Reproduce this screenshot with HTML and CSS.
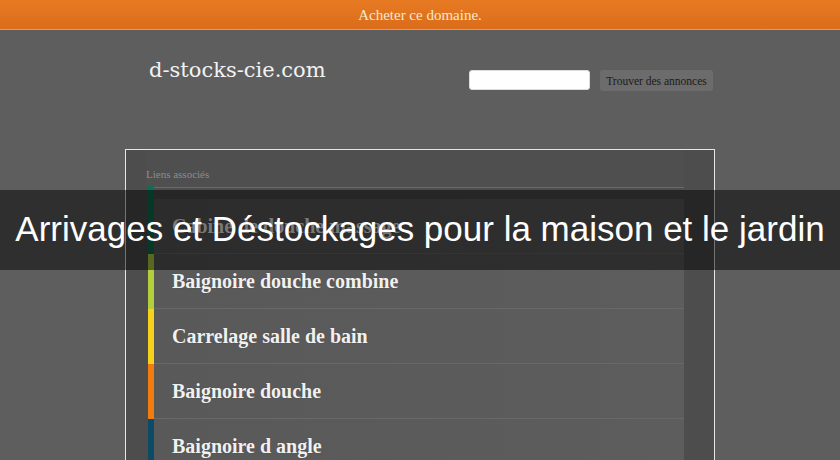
FILE: index.html
```html
<!DOCTYPE html>
<html lang="fr">
<head>
<meta charset="utf-8">
<title>d-stocks-cie.com</title>
<link rel="stylesheet" href="styles.css">
</head>
<body>
<div class="topbar">Acheter ce domaine.</div>
<div class="header">
  <div class="logo">d-stocks-cie.com</div>
  <form class="search">
    <input class="search-input" type="text">
    <button class="search-btn" type="button">Trouver des annonces</button>
  </form>
</div>
<div class="box">
  <div class="box-title">Liens associés</div>
  <ul class="links">
    <li class="link first"><span class="bar c1"></span><span class="label">Cabine de douche massage</span></li>
    <li class="link"><span class="bar c2"></span><span class="label">Baignoire douche combine</span></li>
    <li class="link"><span class="bar c3"></span><span class="label">Carrelage salle de bain</span></li>
    <li class="link"><span class="bar c4"></span><span class="label">Baignoire douche</span></li>
    <li class="link"><span class="bar c5"></span><span class="label">Baignoire d angle</span></li>
  </ul>
</div>
<div class="overlay">Arrivages et Déstockages pour la maison et le jardin</div>
</body>
</html>
```

FILE: styles.css
```css
html, body {
  margin: 0;
  padding: 0;
}
body {
  background: #5e5e5e;
  width: 840px;
  height: 460px;
  overflow: hidden;
  position: relative;
  font-family: "Liberation Serif", serif;
}
.topbar {
  height: 29px;
  line-height: 30px;
  background: linear-gradient(#e77b22, #da6c1b);
  border-bottom: 1px solid #c4a178;
  color: #f6e8cc;
  text-align: center;
  font-size: 15px;
}
.header {
  width: 590px;
  height: 119px;
  margin: 0 auto;
  box-sizing: border-box;
  padding: 0 2px 0 24px;
  display: flex;
  justify-content: space-between;
  align-items: flex-start;
}
.logo {
  margin-top: 28px;
  font-family: "DejaVu Serif", serif;
  font-size: 21px;
  line-height: 24px;
  color: #f2f2f2;
}
.search {
  margin: 40px 0 0 0;
  display: flex;
  gap: 10px;
}
.search-input {
  width: 121px;
  height: 20px;
  box-sizing: border-box;
  border: 1px solid #ddd;
  border-radius: 3px;
  background: #fff;
  margin: 0;
  padding: 0;
}
.search-btn {
  width: 113px;
  height: 21px;
  box-sizing: border-box;
  border: none;
  border-radius: 3px;
  background: #6c6c6c;
  color: #1a1a1a;
  font-family: "Liberation Serif", serif;
  font-size: 11.5px;
  padding: 0;
  margin: 0;
}
.box {
  width: 590px;
  height: 330px;
  margin: 0 auto;
  box-sizing: border-box;
  border: 1px solid #e6e6e6;
  border-bottom: none;
  background: #4d4d4d;
  padding: 0 30px 0 22px;
}
.box-title {
  height: 37px;
  line-height: 48px;
  margin-left: -2px;
  font-size: 11px;
  color: #8d8d8d;
  background: #4f4f4f;
}
.links {
  list-style: none;
  margin: 0;
  padding: 11px 0 0 0;
  border-top: 1px solid #6a6a6a;
}
.link {
  display: flex;
  height: 55px;
}
.bar {
  width: 6px;
  flex: none;
}
.first .bar {
  margin-top: -14px;
}
.label {
  flex: 1;
  background: linear-gradient(90deg, #595959, #5d5d5d);
  border-bottom: 1px solid #686868;
  padding-left: 18px;
  line-height: 55px;
  font-size: 20px;
  font-weight: bold;
  color: #f1f1f1;
  text-shadow: 0 0 1px rgba(0,0,0,0.3);
}
.c1 { background: #0e6e4f; }
.c2 { background: #b4cf3c; }
.c3 { background: #f7d21b; }
.c4 { background: #f27c0e; }
.c5 { background: #0b4b66; }
.overlay {
  position: absolute;
  left: 0;
  top: 190px;
  width: 840px;
  height: 80px;
  line-height: 78px;
  background: rgba(0,0,0,0.5);
  color: #ffffff;
  text-align: center;
  font-family: "Liberation Sans", Arial, sans-serif;
  font-size: 35px;
}
```
